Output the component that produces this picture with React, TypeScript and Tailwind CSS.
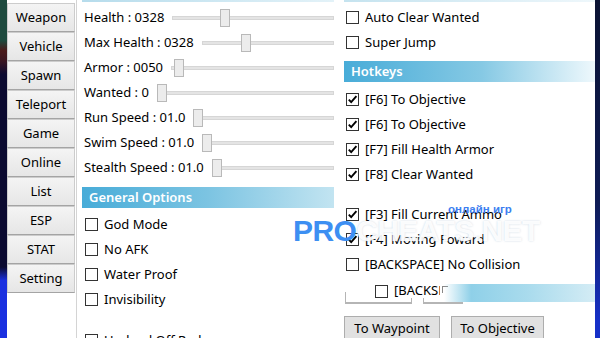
import React from "react";

const FONT = { fontFamily: '"Noto Sans", "Open Sans", Arial, sans-serif' };

const tabs = ["Weapon", "Vehicle", "Spawn", "Teleport", "Game", "Online", "List", "ESP", "STAT", "Setting"];

const sliders = [
  { label: "Health : 0328", thumb: 48 },
  { label: "Max Health : 0328", thumb: 39 },
  { label: "Armor : 0050", thumb: 3 },
  { label: "Wanted : 0", thumb: 0 },
  { label: "Run Speed : 01.0", thumb: 0 },
  { label: "Swim Speed : 01.0", thumb: 0 },
  { label: "Stealth Speed : 01.0", thumb: 0 },
];

function Box({ checked = false }: { checked?: boolean }) {
  return (
    <span className="flex h-[13px] w-[13px] shrink-0 items-center justify-center border border-[#333333] bg-white">
      {checked && (
        <svg width="11" height="11" viewBox="0 0 11 11">
          <path d="M1.8 5.6 L4.2 8.2 L9.4 2.2" fill="none" stroke="#000" strokeWidth="1.9" />
        </svg>
      )}
    </span>
  );
}

function Check({ label, checked = false }: { label: string; checked?: boolean }) {
  return (
    <div className="flex h-[25px] items-center gap-[6px] pl-[2px]">
      <Box checked={checked} />
      <span className="text-[13px] text-black">{label}</span>
    </div>
  );
}

function Header({ title, to }: { title: string; to: string }) {
  return (
    <div className={`flex h-[21px] items-center pl-[7px] text-[13px] font-semibold text-white ${to}`}>
      {title}
    </div>
  );
}

export default function App() {
  return (
    <div className="relative flex h-[338px] w-[600px] overflow-hidden bg-white" style={FONT}>
      {/* desktop edge */}
      <div className="w-[7px] shrink-0 bg-[linear-gradient(180deg,#1e4a3e_0%,#1e4a3e_12%,#4a1a1a_15%,#3a1520_18%,#0b0a30_22%,#0b0a30_79%,#1a30e0_83%,#1a30e0_100%)]" />

      {/* tab buttons */}
      <div className="flex w-[70px] shrink-0 flex-col border-r border-[#d4d4d4] pt-[3px]">
        {tabs.map((t) => (
          <button
            key={t}
            className="h-[29px] w-[68px] border border-[#cccccc] border-b-[#a4a4a4] bg-[linear-gradient(180deg,#f4f4f4,#e6e6e6)] text-[13px] text-black"
          >
            {t}
          </button>
        ))}
      </div>

      <div className="flex flex-1">
        {/* left column */}
        <div className="w-[259px] shrink-0 pl-[5px] pr-[2px]">
          <div className="h-[2px] bg-[linear-gradient(90deg,#b6dcec,#e3f2f8)]" />
          <div className="mt-[3px]">
            {sliders.map((s) => (
              <div key={s.label} className="flex h-[25px] items-center gap-[8px] pl-[2px]">
                <span className="whitespace-nowrap text-[13px] text-black">{s.label}</span>
                <div className="relative h-[18px] flex-1">
                  <div className="absolute left-0 right-0 top-[7px] h-[4px] border border-[#d6d6d6] bg-[#e4e4e4]" />
                  <div
                    className="absolute top-0 h-[18px] w-[10px] border border-[#b9b9b9] bg-[#ececec]"
                    style={{ left: s.thumb }}
                  />
                </div>
              </div>
            ))}
          </div>

          <div className="mt-[7px]">
            <Header title="General Options" to="bg-[linear-gradient(90deg,#48acd8,#7cc4e2_50%,#c2e4f1)]" />
          </div>
          <div className="mt-[4px] pl-[1px]">
            <Check label="God Mode" />
            <Check label="No AFK" />
            <Check label="Water Proof" />
            <Check label="Invisibility" />
            <div className="mt-[16px]">
              <Check label="Undead Off Radar" />
            </div>
          </div>
        </div>

        {/* right column */}
        <div className="ml-[8px] w-[251px] shrink-0">
          <div className="h-[2px] bg-[linear-gradient(90deg,#c5e3ef,#eef7fb)]" />
          <div className="mt-[3px]">
            <Check label="Auto Clear Wanted" />
            <Check label="Super Jump" />
          </div>
          <div className="mt-[6px]">
            <Header title="Hotkeys" to="bg-[linear-gradient(90deg,#48acd8,#86c9e4_55%,#eef8fc)]" />
          </div>
          <div className="mt-[5px]">
            <Check label="[F6] To Objective" checked />
            <Check label="[F6] To Objective" checked />
            <Check label="[F7] Fill Health Armor" checked />
            <Check label="[F8] Clear Wanted" checked />
          </div>
          <div className="mt-[15px]">
            <Check label="[F3] Fill Current Ammo" checked />
            <Check label="[F4] Moving Foward" checked />
            <Check label="[BACKSPACE] No Collision" />
          </div>

          {/* overlapped controls */}
          <div className="relative mt-[7px] h-[20px]">
            <div className="absolute left-[1px] top-[8px] h-[12px] w-[67px] border-x border-b-2 border-[#b5b5b5]" />
            <div className="absolute left-[79px] top-[8px] h-[12px] w-[40px] border-l border-b-2 border-[#b5b5b5]" />
            <div className="absolute left-[30px] top-0 flex h-[14px] w-[66px] items-center gap-[6px] overflow-hidden bg-white pl-[1px]">
              <Box />
              <span className="whitespace-nowrap text-[13px] text-black">[BACKSPACE]</span>
            </div>
            <div className="absolute left-[98px] top-[2px] h-[7px] w-[6px] border-l border-t border-[#888888]" />
            <div className="absolute left-[100px] right-0 top-0 h-[18px] bg-[linear-gradient(90deg,rgba(140,206,232,0)_0%,#8fd0e8_18%,#a9dbed_55%,#d4ecf5_100%)]" />
          </div>

          <div className="mt-[12px] flex gap-[11px]">
            <button className="h-[26px] w-[96px] border border-[#adadad] bg-[#e1e1e1] text-[13px] text-black">
              To Waypoint
            </button>
            <button className="h-[26px] w-[93px] border border-[#adadad] bg-[#e1e1e1] text-[13px] text-black">
              To Objective
            </button>
          </div>
        </div>
      </div>

      {/* desktop edge */}
      <div className="w-[5px] shrink-0 bg-[linear-gradient(180deg,#0b1333,#0f1c55_60%,#1630c8_95%)]" />

      {/* watermark */}
      <div
        className="pointer-events-none absolute left-[293px] top-[203px]"
        style={{ fontFamily: '"Liberation Sans", Arial, sans-serif' }}
      >
        <div className="pl-[155px] text-[11.5px] font-bold leading-[13px] text-[#3d7ff0]">онлайн игр</div>
        <div className="text-[30px] font-bold leading-[30px] tracking-[-0.6px]">
          <span className="text-[#3d8ff2]">PRO</span>
          <span className="text-white/90 [text-shadow:0_0_2px_rgba(120,150,180,0.4)]">CHEATS.NET</span>
        </div>
      </div>
    </div>
  );
}
